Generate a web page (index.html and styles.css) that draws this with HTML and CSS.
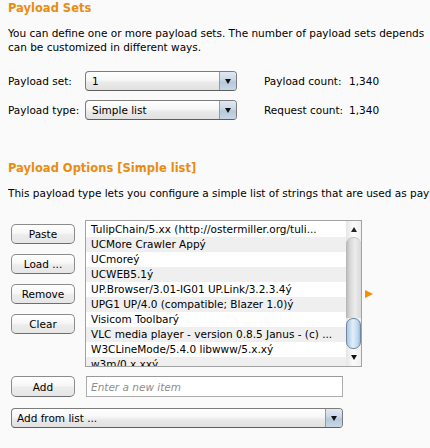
FILE: index.html
```html
<!DOCTYPE html>
<html lang="en">
<head>
<meta charset="utf-8">
<title>Payloads</title>
<link rel="stylesheet" href="styles.css">
</head>
<body>
<div class="page">
  <h2 class="title">Payload Sets</h2>
  <p class="desc">You can define one or more payload sets. The number of payload sets depends<br>can be customized in different ways.</p>

  <div class="sets-grid">
    <span class="lbl">Payload set:</span>
    <div class="combo"><span class="combo-text">1</span><span class="combo-btn"><i class="tri-down"></i></span></div>
    <span class="stat">Payload count:</span>
    <span class="val">1,340</span>

    <span class="lbl">Payload type:</span>
    <div class="combo"><span class="combo-text">Simple list</span><span class="combo-btn"><i class="tri-down"></i></span></div>
    <span class="stat">Request count:</span>
    <span class="val">1,340</span>
  </div>

  <h2 class="title title-2">Payload Options [Simple list]</h2>
  <p class="desc desc-2">This payload type lets you configure a simple list of strings that are used as payloads.</p>

  <div class="editor">
    <div class="btn-col">
      <button class="btn">Paste</button>
      <button class="btn">Load ...</button>
      <button class="btn">Remove</button>
      <button class="btn">Clear</button>
    </div>
    <div class="list">
      <div class="rows">
        <div class="row">TulipChain/5.xx (http://ostermiller.org/tuli...</div>
        <div class="row">UCMore Crawler Appý</div>
        <div class="row">UCmoreý</div>
        <div class="row">UCWEB5.1ý</div>
        <div class="row">UP.Browser/3.01-IG01 UP.Link/3.2.3.4ý</div>
        <div class="row">UPG1 UP/4.0 (compatible; Blazer 1.0)ý</div>
        <div class="row">Visicom Toolbarý</div>
        <div class="row">VLC media player - version 0.8.5 Janus - (c) ...</div>
        <div class="row">W3CLineMode/5.4.0 libwww/5.x.xý</div>
        <div class="row">w3m/0.x.xxý</div>
      </div>
      <div class="sb">
        <div class="sb-up"><i class="tri-up"></i></div>
        <div class="sb-track"></div>
        <div class="sb-thumb"></div>
        <div class="sb-down"><i class="tri-down"></i></div>
      </div>
    </div>
    <span class="arrow"></span>
  </div>

  <div class="add-row">
    <button class="btn btn-add">Add</button>
    <input class="item-input" type="text" placeholder="Enter a new item">
  </div>

  <div class="combo add-from"><span class="combo-text">Add from list ...</span><span class="combo-btn"><i class="tri-down"></i></span></div>
</div>
</body>
</html>
```

FILE: styles.css
```css
* { box-sizing: border-box; }
html, body { margin: 0; padding: 0; }
body {
  background: #fafafa;
  font-family: "DejaVu Sans", "Noto Sans", sans-serif;
  font-size: 10.5px;
  color: #000;
  width: 430px;
  height: 448px;
  overflow: hidden;
}
.page { padding: 1px 0 0 8px; }

.title {
  margin: 0;
  font-size: 11.5px;
  font-weight: bold;
  color: #e98c14;
  line-height: 14px;
  white-space: nowrap;
}
.title-2 { margin-top: 41px; }

.desc {
  margin: 11px 0 0;
  line-height: 14px;
  white-space: nowrap;
  overflow: hidden;
  width: 422px;
}

.sets-grid {
  display: grid;
  grid-template-columns: 77px 152px 112px auto;
  grid-auto-rows: 20px;
  row-gap: 9px;
  align-items: center;
  margin-top: 17px;
}
.stat { padding-left: 27px; white-space: nowrap; }
.val { white-space: nowrap; }

.combo {
  display: flex;
  height: 20px;
  border: 1px solid #7c7c7c;
  border-bottom-color: #5e5e5e;
  border-radius: 4px;
  background: linear-gradient(#ffffff, #f6f6f6 45%, #e9e9e9 60%, #e1e1e1);
  overflow: hidden;
}
.combo-text { flex: 1; padding-left: 6px; line-height: 18px; white-space: nowrap; }
.combo-btn {
  width: 17px;
  display: flex;
  align-items: center;
  justify-content: center;
  border-left: 1px solid #8a9db2;
  background: linear-gradient(#e0e9f2, #c9d7e5 45%, #b5c8dc 55%, #c8d7e6);
}
.tri-down {
  display: block;
  width: 0; height: 0;
  border-left: 3px solid transparent;
  border-right: 3px solid transparent;
  border-top: 5px solid #111;
}
.tri-up {
  display: block;
  width: 0; height: 0;
  border-left: 3.5px solid transparent;
  border-right: 3.5px solid transparent;
  border-bottom: 5px solid #222;
}

.editor {
  display: flex;
  align-items: flex-start;
  margin: 20px 0 0 3px;
}
.btn-col {
  display: flex;
  flex-direction: column;
  gap: 10px;
  padding-top: 4px;
  width: 64px;
}
.btn {
  height: 20px;
  width: 64px;
  padding: 0;
  border: 1px solid #8c8c8c;
  border-bottom-color: #6e6e6e;
  border-radius: 5px;
  background: linear-gradient(#ffffff, #f7f7f7 45%, #ececec 55%, #e6e6e6);
  font-family: inherit;
  font-size: 10.5px;
  color: #000;
  line-height: 18px;
}

.list {
  margin-left: 10px;
  width: 277px;
  height: 147px;
  border: 1px solid #a2a2a2;
  background: #fff;
  display: flex;
}
.rows { flex: 1; overflow: hidden; padding-top: 1px; }
.row {
  height: 15px;
  line-height: 15px;
  padding-left: 5px;
  white-space: nowrap;
  overflow: hidden;
}
.row:nth-child(even) { background: #efefef; }

.sb {
  width: 15px;
  display: flex;
  flex-direction: column;
  background: linear-gradient(to right, #e6e6e6, #fbfbfb 50%, #f0f0f0);
}
.sb-up, .sb-down {
  display: flex;
  align-items: center;
  justify-content: center;
}
.sb-up { height: 16px; }
.sb-down { height: 17px; }
.sb-track {
  flex: 1;
  border-radius: 7px 7px 0 0;
  background: linear-gradient(to right, #b4b4b4, #d6d6d6 25%, #ececec 60%, #d9d9d9);
  border-top: 1px solid #c4c4c4;
}
.sb-thumb {
  height: 31px;
  border-radius: 7px;
  border: 1px solid #6f879f;
  background: linear-gradient(to right, #a9c7e3, #e3eef8 45%, #c3d9ee 80%, #9fbcd8);
}

.arrow {
  align-self: center;
  margin-left: 3px;
  width: 0; height: 0;
  border-left: 8px solid #ef8f0a;
  border-top: 4.5px solid transparent;
  border-bottom: 4.5px solid transparent;
}

.add-row {
  display: flex;
  gap: 11px;
  margin: 9px 0 0 3px;
}
.btn-add { height: 21px; }
.item-input {
  width: 257px;
  height: 21px;
  margin: 0;
  border: 1px solid #acacac;
  border-top-color: #9a9a9a;
  background: #fff;
  padding: 0 0 0 4px;
  font-family: inherit;
  font-size: 10.5px;
  outline: none;
}
.item-input::placeholder { color: #8e8e8e; font-style: italic; }

.add-from {
  width: 332px;
  margin: 11px 0 0 3px;
}
.add-from .combo-text { padding-left: 5px; }
```
